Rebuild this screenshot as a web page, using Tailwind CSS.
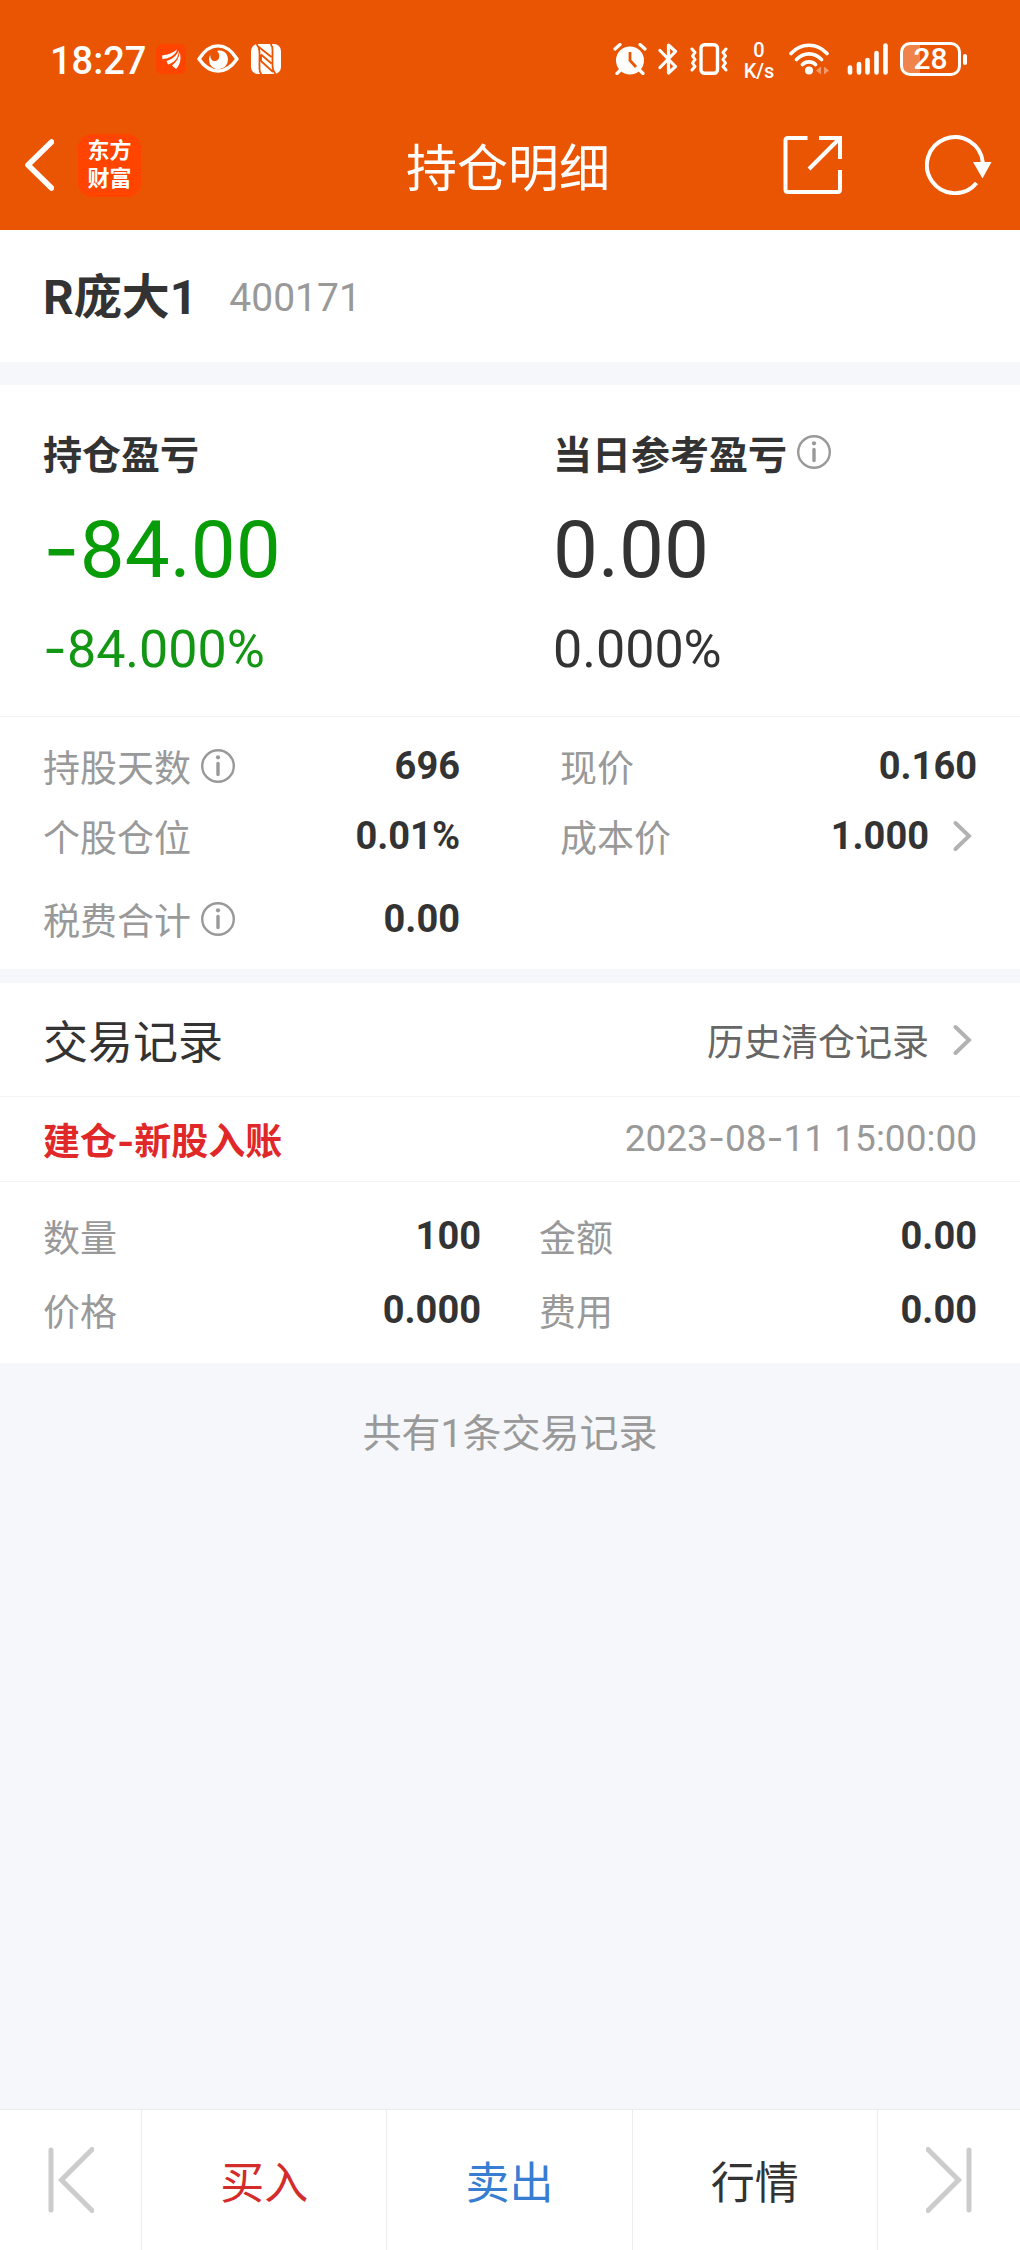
<!DOCTYPE html>
<html lang="zh-CN">
<head>
<meta charset="utf-8">
<meta name="viewport" content="width=device-width, initial-scale=1">
<title>持仓明细</title>
<script src="https://cdn.jsdelivr.net/npm/@tailwindcss/browser@4"></script>
</head>
<body class="flex min-h-screen flex-col bg-[#f6f7fa] font-['Roboto','Noto_Sans_CJK_SC',sans-serif] text-[#333333]">
<svg class="hidden" aria-hidden="true">
  <symbol id="info" viewBox="0 0 34 34"><circle cx="17" cy="17" r="15.8" fill="none" stroke="currentColor" stroke-width="2.4"/><circle cx="17" cy="8.3" r="2.1" fill="currentColor"/><path d="M17 14.5V25.500" fill="none" stroke="currentColor" stroke-width="3.4" stroke-linecap="round"/></symbol>
  <symbol id="chevron" viewBox="0 0 30 34"><path d="M8.500 4L22 17L8.500 30" fill="none" stroke="currentColor" stroke-width="4" stroke-linecap="round"/></symbol>
  <symbol id="first" viewBox="0 0 46 66"><path d="M3 3V63M44 2.500L13.500 33L44 63.500" fill="none" stroke="currentColor" stroke-width="5" stroke-linecap="round"/></symbol>
</svg>

<header class="bg-[#ea5504] pb-[18px] text-white">
  <div class="flex h-[118px] items-center justify-between pr-[53px] pl-[50px]">
    <div class="flex items-center">
      <span class="pt-1 text-[38px] leading-12 font-medium">18:27</span>
      <svg class="ml-[10px] size-[30px]" viewBox="0 0 30 30"><rect width="30" height="30" rx="6" fill="#ff4400"/><path fill="#fff" d="M6 11.500C12 10.800 17 9 21 5.500C20 11 13 14.500 6.500 15.300ZM10.500 17C16.500 15 20.500 12 22.500 6.500C23.500 13 18 19 12 20.500ZM16 21.500C20.500 18 23 14 23.800 8.500C25.500 15 24 21 20 25Z"/></svg>
      <svg class="ml-[11px] h-[30px] w-[42px]" viewBox="0 0 42 30"><path d="M2 15C13-2.500 29-2.500 40 15C29 31 13 31 2 15Z" fill="none" stroke="#fff" stroke-width="3.400" stroke-linejoin="round"/><path fill="#fff" d="M20 7C26 5 31 9.500 31 15.500A9.500 9.500 0 0 1 12 16C11.800 14 12.500 12 13.500 11C13 15 15.500 17.500 18.500 17C23 16 23.500 10 20 7Z"/></svg>
      <svg class="ml-3 size-[30px]" viewBox="0 0 30 30"><rect width="30" height="30" rx="7" fill="#fff"/><path fill="none" stroke="#ea5504" stroke-width="1.800" d="M5.500 0C8 3 8.500 5 8.500 8V23C8.500 26 8 28 10.500 30M19.500 0C22 2 21.500 5 21.500 8V22C21.500 26 22 27 24.500 30M6.500 2L20.500 13M10 10.500L20.500 19.500M10 17L22 28M10 10.500V17"/></svg>
    </div>
    <div class="flex items-center">
      <svg class="h-8 w-[34px]" viewBox="0 0 34 32"><circle cx="17" cy="17.500" r="14" fill="#fff"/><path d="M2 6L7 1.500M32 6L27 1.500M7.500 27L4 30.500M26.500 27L30 30.500" stroke="#fff" stroke-width="3.200" stroke-linecap="round"/><path d="M17 9V17.500L23 24" fill="none" stroke="#ea5504" stroke-width="2.800"/></svg>
      <svg class="ml-[11px] h-8 w-5" viewBox="0 0 20 32"><path d="M2 7.500L17.500 23.500L10.500 30V2L17.500 8.500L2 24.500" fill="none" stroke="#fff" stroke-width="3.200" stroke-linecap="round" stroke-linejoin="round"/></svg>
      <svg class="ml-3 h-8 w-[38px]" viewBox="0 0 38 32"><rect x="11" y="1.800" width="16.500" height="28.400" rx="3.500" fill="none" stroke="#fff" stroke-width="3.400"/><path d="M2 6L5 9.500L2.500 13L5 16.500L2.500 20L5 23.500L2 27M36 6L33 9.500L35.500 13L33 16.500L35.500 20L33 23.500L36 27" fill="none" stroke="#fff" stroke-width="3" stroke-linecap="round" stroke-linejoin="round"/></svg>
      <span class="ml-[14px] flex w-[34px] flex-col items-center pt-1 text-[20px] leading-[21px] font-medium"><span>0</span><span>K/s</span></span>
      <svg class="ml-[13px] h-8 w-10" viewBox="0 0 40 32"><path d="M2 10.500C12-.5 28-.5 38 10.500M7.500 16.500C15 9 25 9 32.500 16.500M13.500 21.500C17 18 23 18 26.500 21.500" fill="none" stroke="#fff" stroke-width="3.600" stroke-linecap="round"/><circle cx="20" cy="27.500" r="4" fill="#fff"/><path d="M32 23.500V31.500L27 27.500ZM35 23.500V31.500L40 27.500Z" fill="#f49a6a"/></svg>
      <svg class="ml-[18px] h-8 w-[42px]" viewBox="0 0 42 32"><path d="M3 24.500V29.500M12 21V29.500M20.500 17V29.500M29.500 10V29.500M38.500 2.500V29.500" stroke="#fff" stroke-width="4.600" stroke-linecap="round"/></svg>
      <span class="ml-[11px] flex h-[34px] w-[61px] items-center justify-center rounded-[10px] border-3 border-white bg-linear-to-r from-[#f0834a] from-30% to-transparent to-30% text-[30px] leading-7 font-medium">28</span>
      <span class="ml-[2px] h-[11px] w-1 rounded-full bg-white"></span>
    </div>
  </div>
  <div class="grid h-[94px] grid-cols-[1fr_auto_1fr] items-center pr-7 pl-6">
    <div class="flex items-center gap-6">
      <button type="button" aria-label="返回"><svg class="block h-[52px] w-[30px]" viewBox="0 0 30 52"><path d="M27.500 3L4 26L27.500 49" fill="none" stroke="#fff" stroke-width="5.500" stroke-linecap="round" stroke-linejoin="round"/></svg></button>
      <a href="#" class="flex size-[63px] flex-col items-center justify-center rounded-[14px] bg-[#ff4400] text-[22px] leading-7 font-bold"><span>东方</span><span>财富</span></a>
    </div>
    <h1 class="font-['Noto_Sans_CJK_SC',sans-serif] text-[51px] leading-[64px]">持仓明细</h1>
    <div class="flex items-center justify-end gap-[82px]">
      <button type="button" aria-label="分享"><svg class="block size-[60px]" viewBox="0 0 60 60"><path d="M24.500 3H5Q2.500 3 2.500 5.500V54.500Q2.500 57 5 57H54.500Q57 57 57 54.500V35M36 3H57V24M57 3L26 34" fill="none" stroke="#fff" stroke-width="4"/></svg></button>
      <button type="button" aria-label="刷新"><svg class="block h-[60px] w-[67px]" viewBox="0 0 67 60"><path d="M57.800 27.500A28 28 0 1 0 51.500 48" fill="none" stroke="#fff" stroke-width="4"/><path d="M48 27H66.500L57.500 43.500Z" fill="#fff"/></svg></button>
    </div>
  </div>
</header>

<main class="flex-1">
  <section class="flex h-[132px] items-center gap-8 bg-white px-[43px] pt-1">
    <h2 class="text-[48px] leading-[64px] font-bold">R庞大1</h2>
    <span class="text-[39px] leading-12 text-[#999999]">400171</span>
  </section>

  <section class="mt-[23px] bg-white">
    <div class="grid grid-cols-2 border-b border-[#f2f3f5] pt-[43px] pb-[35px]">
      <div class="px-[43px]">
        <h3 class="font-['Noto_Sans_CJK_SC',sans-serif] text-[39px] leading-12 font-bold">持仓盈亏</h3>
        <p class="mt-[26px] text-[80px] leading-[96px] text-[#089c08]"><span class="font-['Inter',sans-serif] leading-none">-</span>84.00</p>
        <p class="mt-5 text-[52px] leading-[63px] text-[#139613]"><span class="font-['Inter',sans-serif] leading-none">-</span>84.000%</p>
      </div>
      <div class="px-[43px]">
        <h3 class="flex items-center gap-[10px] font-['Noto_Sans_CJK_SC',sans-serif] text-[39px] leading-12 font-bold">当日参考盈亏<svg class="size-[34px] text-[#999999]"><use href="#info"/></svg></h3>
        <p class="mt-[26px] text-[80px] leading-[96px]">0.00</p>
        <p class="mt-5 text-[52px] leading-[63px]">0.000%</p>
      </div>
    </div>
    <dl class="grid grid-cols-2 gap-x-[100px] px-[43px] pt-[14px] pb-[15px] text-[37px] leading-12">
      <div class="flex h-[70px] items-center justify-between"><dt class="flex items-center gap-[10px] font-['Noto_Sans_CJK_SC',sans-serif] text-[#999999]">持股天数<svg class="size-[34px]"><use href="#info"/></svg></dt><dd class="text-[38px] font-bold">696</dd></div>
      <div class="flex h-[70px] items-center justify-between"><dt class="font-['Noto_Sans_CJK_SC',sans-serif] text-[#999999]">现价</dt><dd class="text-[38px] font-bold">0.160</dd></div>
      <div class="flex h-[70px] items-center justify-between"><dt class="font-['Noto_Sans_CJK_SC',sans-serif] text-[#999999]">个股仓位</dt><dd class="text-[38px] font-bold">0.01%</dd></div>
      <div class="flex h-[70px] items-center justify-between"><dt class="font-['Noto_Sans_CJK_SC',sans-serif] text-[#999999]">成本价</dt><dd><a href="#" class="flex items-center gap-[18px] text-[38px] font-bold">1.000<svg class="h-[34px] w-[30px] text-[#b2b2b2]"><use href="#chevron"/></svg></a></dd></div>
      <div class="mt-[13px] flex h-[70px] items-center justify-between"><dt class="flex items-center gap-[10px] font-['Noto_Sans_CJK_SC',sans-serif] text-[#999999]">税费合计<svg class="size-[34px]"><use href="#info"/></svg></dt><dd class="text-[38px] font-bold">0.00</dd></div>
    </dl>
  </section>

  <section class="mt-[14px] bg-white">
    <div class="flex h-[114px] items-center justify-between border-b border-[#f2f3f5] px-[43px] font-['Noto_Sans_CJK_SC',sans-serif]">
      <h2 class="text-[45px] leading-[64px]">交易记录</h2>
      <a href="#" class="flex items-center gap-[18px] text-[37px] leading-12 text-[#666666]">历史清仓记录<svg class="h-[34px] w-[30px] text-[#b2b2b2]"><use href="#chevron"/></svg></a>
    </div>
    <div class="flex h-[85px] items-center justify-between border-b border-[#f2f3f5] px-[43px] leading-12">
      <h3 class="font-['Noto_Sans_CJK_SC',sans-serif] text-[37px] font-bold text-[#e12828]">建仓<span class="font-['Inter',sans-serif] leading-none">-</span>新股入账</h3>
      <time datetime="2023-08-11T15:00:00" class="text-[37px] text-[#999999]">2023<span class="font-['Inter',sans-serif] leading-none">-</span>08<span class="font-['Inter',sans-serif] leading-none">-</span>11 15:00:00</time>
    </div>
    <dl class="grid grid-cols-2 gap-x-[58px] px-[43px] pt-[17px] pb-4 text-[37px] leading-12">
      <div class="flex h-[74px] items-center justify-between"><dt class="font-['Noto_Sans_CJK_SC',sans-serif] text-[#999999]">数量</dt><dd class="text-[38px] font-bold">100</dd></div>
      <div class="flex h-[74px] items-center justify-between"><dt class="font-['Noto_Sans_CJK_SC',sans-serif] text-[#999999]">金额</dt><dd class="text-[38px] font-bold">0.00</dd></div>
      <div class="flex h-[74px] items-center justify-between"><dt class="font-['Noto_Sans_CJK_SC',sans-serif] text-[#999999]">价格</dt><dd class="text-[38px] font-bold">0.000</dd></div>
      <div class="flex h-[74px] items-center justify-between"><dt class="font-['Noto_Sans_CJK_SC',sans-serif] text-[#999999]">费用</dt><dd class="text-[38px] font-bold">0.00</dd></div>
    </dl>
  </section>
  <p class="py-[47px] text-center text-[39px] leading-12 text-[#999999]">共有1条交易记录</p>
</main>

<nav class="flex h-[141px] border-t border-[#ebecee] bg-white font-['Noto_Sans_CJK_SC',sans-serif] text-[44px] leading-[64px]">
  <button type="button" aria-label="上一只" class="flex w-[142px] items-center justify-center border-r border-[#ebecee] text-[#cccccc]"><svg class="h-[66px] w-[46px]"><use href="#first"/></svg></button>
  <button type="button" class="flex-1 border-r border-[#ebecee] text-[#d42b2b]">买入</button>
  <button type="button" class="flex-1 border-r border-[#ebecee] text-[#377dd2]">卖出</button>
  <button type="button" class="flex-1 border-r border-[#ebecee]">行情</button>
  <button type="button" aria-label="下一只" class="flex w-[142px] items-center justify-center text-[#cccccc]"><svg class="h-[66px] w-[46px] rotate-180"><use href="#first"/></svg></button>
</nav>
</body>
</html>
